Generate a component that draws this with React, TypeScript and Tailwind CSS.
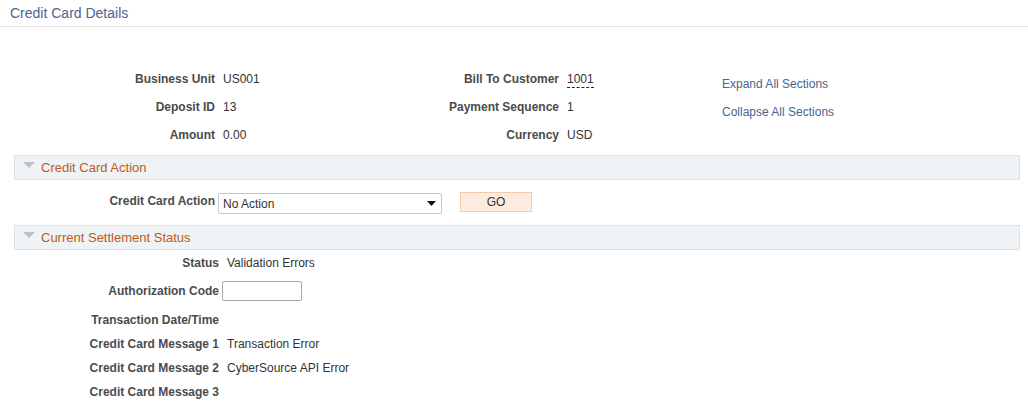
import { ReactNode } from 'react';

const font = { fontFamily: '"Liberation Sans", Arial, sans-serif' };

function SectionBar({ title }: { title: string }) {
  return (
    <div className="ml-[14px] mr-[8px] h-[25px] flex items-center bg-[#f0f3f5] border border-[#dfe3e6]">
      <svg width="12" height="7" viewBox="0 0 12 7" className="ml-[8px] -mt-[5px]">
        <polygon points="0,0 12,0 6,6" fill="#b9c0c6" />
      </svg>
      <span className="ml-[6px] text-[13px] text-[#c0591a]">{title}</span>
    </div>
  );
}

function Row({ label, h, children }: { label: string; h: string; children?: ReactNode }) {
  return (
    <div className={`flex items-center ${h}`}>
      <div className="w-[219px] text-right font-bold text-[#4b4b4b]">{label}</div>
      <div className="pl-[8px] text-[#333]">{children}</div>
    </div>
  );
}

export default function App() {
  return (
    <div className="w-[1028px] h-[407px] bg-white text-[12px] overflow-hidden" style={font}>
      <header className="h-[27px] border-b border-[#e3e3e3] pl-[10px] pt-[4px]">
        <h1 className="text-[14px] leading-[18px] text-[#4a6590]">Credit Card Details</h1>
      </header>

      <div className="flex mt-[38px] h-[90px]">
        <div className="grid grid-cols-[215px_209px_135px_163px] auto-rows-[28px] items-center">
          <div className="text-right font-bold text-[#4b4b4b]">Business Unit</div>
          <div className="pl-[8px] text-[#333]">US001</div>
          <div className="text-right font-bold text-[#4b4b4b]">Bill To Customer</div>
          <div className="pl-[8px] text-[#333]">
            <span className="border-b border-dashed border-[#222] pb-[1px]">1001</span>
          </div>

          <div className="text-right font-bold text-[#4b4b4b]">Deposit ID</div>
          <div className="pl-[8px] text-[#333]">13</div>
          <div className="text-right font-bold text-[#4b4b4b]">Payment Sequence</div>
          <div className="pl-[8px] text-[#333]">1</div>

          <div className="text-right font-bold text-[#4b4b4b]">Amount</div>
          <div className="pl-[8px] text-[#333]">0.00</div>
          <div className="text-right font-bold text-[#4b4b4b]">Currency</div>
          <div className="pl-[8px] text-[#333]">USD</div>
        </div>
        <div className="flex flex-col pt-[11px] gap-[12px] text-[#4a6590]">
          <span className="leading-[16px]">Expand All Sections</span>
          <span className="leading-[16px]">Collapse All Sections</span>
        </div>
      </div>

      <SectionBar title="Credit Card Action" />

      <div className="h-[45px] flex items-start pt-[13px]">
        <div className="w-[215px] text-right font-bold text-[#4b4b4b] -mt-[1px]">Credit Card Action</div>
        <div className="ml-[3px] w-[224px] h-[21px] border border-[#c9c9c9] rounded-[2px] flex items-center justify-between pl-[4px] pr-[5px] text-[#333]">
          <span className="mt-[1px]">No Action</span>
          <svg width="9" height="5" viewBox="0 0 9 5">
            <polygon points="0,0 9,0 4.5,5" fill="#111" />
          </svg>
        </div>
        <div className="ml-[18px] -mt-[1px] w-[72px] h-[20px] bg-[#fcebde] border border-[#f2cba8] flex items-center justify-center text-[#333]">
          GO
        </div>
      </div>

      <SectionBar title="Current Settlement Status" />

      <div className="flex flex-col pt-[1px]">
        <Row label="Status" h="h-[24px]">Validation Errors</Row>
        <div className="flex items-center h-[32px]">
          <div className="w-[219px] text-right font-bold text-[#4b4b4b]">Authorization Code</div>
          <div className="ml-[3px] w-[80px] h-[20px] border border-[#a8a8a8] rounded-[2px]" />
        </div>
        <Row label="Transaction Date/Time" h="h-[25px]" />
        <Row label="Credit Card Message 1" h="h-[24px]">Transaction Error</Row>
        <Row label="Credit Card Message 2" h="h-[24px]">CyberSource API Error</Row>
        <Row label="Credit Card Message 3" h="h-[24px]" />
      </div>
    </div>
  );
}
